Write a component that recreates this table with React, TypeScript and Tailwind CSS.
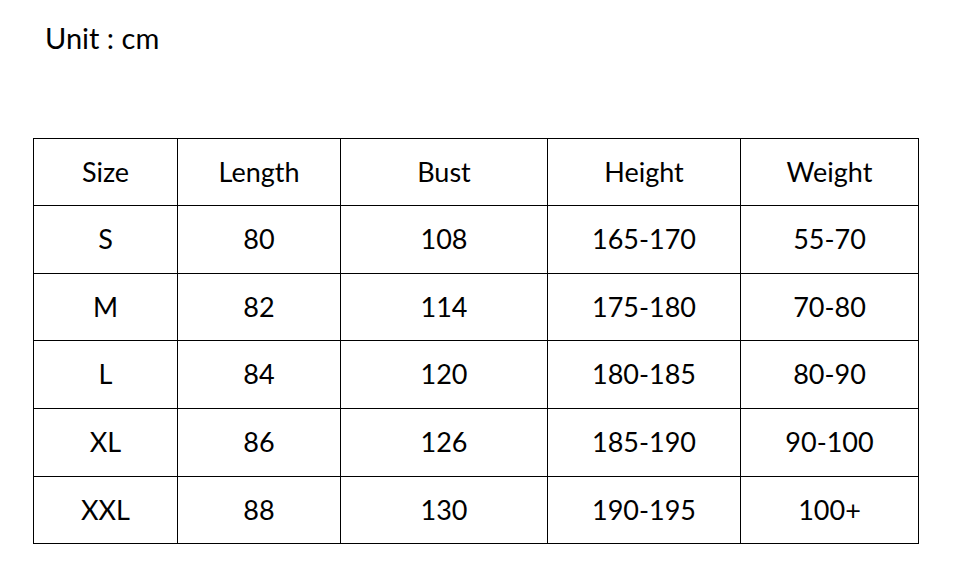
import React from "react";

const rows = [
  ["S", "80", "108", "165-170", "55-70"],
  ["M", "82", "114", "175-180", "70-80"],
  ["L", "84", "120", "180-185", "80-90"],
  ["XL", "86", "126", "185-190", "90-100"],
  ["XXL", "88", "130", "190-195", "100+"],
];

const headers = ["Size", "Length", "Bust", "Height", "Weight"];
const widths = ["w-[144px]", "w-[163px]", "w-[207px]", "w-[193px]", "w-[178px]"];
const rowHeights = ["h-[68px]", "h-[67px]", "h-[68px]", "h-[68px]", "h-[67px]"];

export default function App() {
  return (
    <div className="w-[954px] h-[574px] bg-white text-black font-['Lato',sans-serif] relative">
      {/* Unit label */}
      <div className="pl-[45px] pt-[19px] text-[29px] leading-[38px]">Unit : cm</div>

      {/* Size chart */}
      <table className="ml-[33px] mt-[81px] border-collapse text-[27px] text-center">
        <thead>
          <tr className="h-[67px]">
            {headers.map((h, i) => (
              <th key={h} className={`${widths[i]} border border-black font-normal p-0`}>
                {h}
              </th>
            ))}
          </tr>
        </thead>
        <tbody>
          {rows.map((r, ri) => (
            <tr key={ri} className={rowHeights[ri]}>
              {r.map((c, ci) => (
                <td key={ci} className="border border-black p-0">
                  {c}
                </td>
              ))}
            </tr>
          ))}
        </tbody>
      </table>
    </div>
  );
}
